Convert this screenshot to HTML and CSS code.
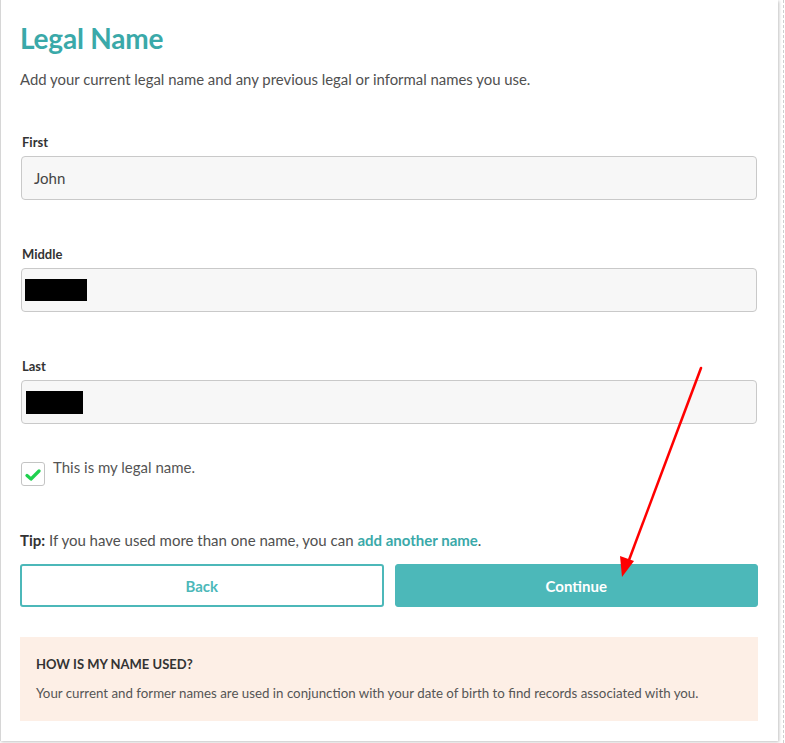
FILE: index.html
```html
<!DOCTYPE html>
<html>
<head>
<meta charset="utf-8">
<link rel="stylesheet" href="styles.css">
</head>
<body>
<div class="page">
  <div class="card">
    <h1 class="title">Legal Name</h1>
    <p class="intro">Add your current legal name and any previous legal or informal names you use.</p>

    <div class="field">
      <label class="label">First</label>
      <div class="input"><span class="value">John</span></div>
    </div>
    <div class="field">
      <label class="label">Middle</label>
      <div class="input"><span class="redact redact-middle"></span></div>
    </div>
    <div class="field">
      <label class="label">Last</label>
      <div class="input"><span class="redact redact-last"></span></div>
    </div>

    <div class="check-row">
      <span class="checkbox">
        <svg width="16" height="14" viewBox="0 0 16 14"><path d="M2 7.5 L6 11 L14 3" fill="none" stroke="#1fd14f" stroke-width="3.2" stroke-linecap="round" stroke-linejoin="round"/></svg>
      </span>
      <span class="check-text">This is my legal name.</span>
    </div>

    <p class="tip"><b>Tip:</b> If you have used more than one name, you can <a class="link">add another name</a>.</p>

    <div class="buttons">
      <button class="btn btn-outline">Back</button>
      <button class="btn btn-fill">Continue</button>
    </div>

    <div class="info">
      <h2 class="info-title">HOW IS MY NAME USED?</h2>
      <p class="info-text">Your current and former names are used in conjunction with your date of birth to find records associated with you.</p>
    </div>
  </div>
  <div class="dashed"></div>
  <svg class="arrow" width="785" height="743" viewBox="0 0 785 743">
    <line x1="701" y1="368" x2="629" y2="560" stroke="#ff0000" stroke-width="2.5" stroke-linecap="round"/>
    <polygon points="622,577 620,556 634,561" fill="#ff0000"/>
  </svg>
</div>
</body>
</html>
```
FILE: styles.css
```css
* { box-sizing: border-box; }
html, body { margin: 0; padding: 0; background: #ffffff; }
body { font-family: Lato, "Open Sans", sans-serif; color: #4a4a4a; }

.page {
  position: relative;
  display: flex;
  width: 785px;
  height: 743px;
}

.card {
  width: 778px;
  height: 741px;
  background: #fff;
  border-left: 1px solid #d6d6d6;
  box-shadow: 1px 1px 3px rgba(0,0,0,0.25);
  padding: 0 20px 0 19px;
}

.dashed {
  margin-left: 5px;
  width: 0;
  height: 743px;
  border-left: 1px dashed #cfcfcf;
}

.title {
  margin: 22px 0 0 0;
  font-size: 28px;
  line-height: 32px;
  font-weight: 700;
  color: #3aa9a9;
  letter-spacing: -0.2px;
}

.intro {
  margin: 16px 0 0 0;
  font-size: 14.9px;
  line-height: 18px;
  color: #505050;
}

.field { margin-top: 46px; }
.field + .field { margin-top: 46px; }

.label {
  display: block;
  margin-left: 2px;
  font-size: 13px;
  line-height: 16px;
  font-weight: 700;
  color: #333;
}

.input {
  margin-top: 6px;
  margin-left: 1px;
  width: 736px;
  height: 44px;
  background: #f7f7f7;
  border: 1px solid #c9c9c9;
  border-radius: 4px;
  display: flex;
  align-items: center;
  padding-left: 12px;
}

.value { font-size: 15px; color: #444; }

.redact { display: block; background: #000; }
.redact-middle { width: 62px; height: 22px; margin-left: -9px; }
.redact-last { width: 57px; height: 23px; margin-left: -8px; }

.check-row {
  margin-top: 38px;
  margin-left: 1px;
  display: flex;
  align-items: flex-start;
}

.checkbox {
  width: 24px;
  height: 24px;
  border: 1px solid #c4c4c4;
  border-radius: 3px;
  background: #fff;
  display: flex;
  align-items: center;
  justify-content: center;
  padding-top: 2px;
}

.check-text {
  margin-left: 8px;
  margin-top: -4px;
  font-size: 15px;
  line-height: 18px;
  color: #555;
}

.tip {
  margin: 45px 0 0 0;
  font-size: 15px;
  line-height: 18px;
  color: #505050;
}
.tip b { color: #333; }
.link { color: #3aa9a9; font-weight: 700; }

.buttons {
  margin-top: 15px;
  display: flex;
  gap: 11px;
  width: 738px;
}

.btn {
  height: 43px;
  border-radius: 3px;
  font-family: Lato, "Open Sans", sans-serif;
  font-size: 15px;
  font-weight: 700;
  cursor: pointer;
}
.btn-outline {
  width: 364px;
  background: #fff;
  border: 2px solid #4cb8b9;
  color: #4cb8b9;
}
.btn-fill {
  width: 364px;
  background: #4cb8b9;
  border: 1px solid #4cb8b9;
  color: #fff;
}

.info {
  margin-top: 30px;
  width: 738px;
  height: 84px;
  background: #fdefe6;
  padding: 19px 16px 0 16px;
}
.info-title {
  margin: 0;
  font-size: 13px;
  line-height: 16px;
  font-weight: 700;
  color: #333;
}
.info-text {
  margin: 13px 0 0 0;
  font-size: 13.3px;
  line-height: 16px;
  color: #555;
}

.arrow {
  position: absolute;
  left: 0;
  top: 0;
  pointer-events: none;
}
```
